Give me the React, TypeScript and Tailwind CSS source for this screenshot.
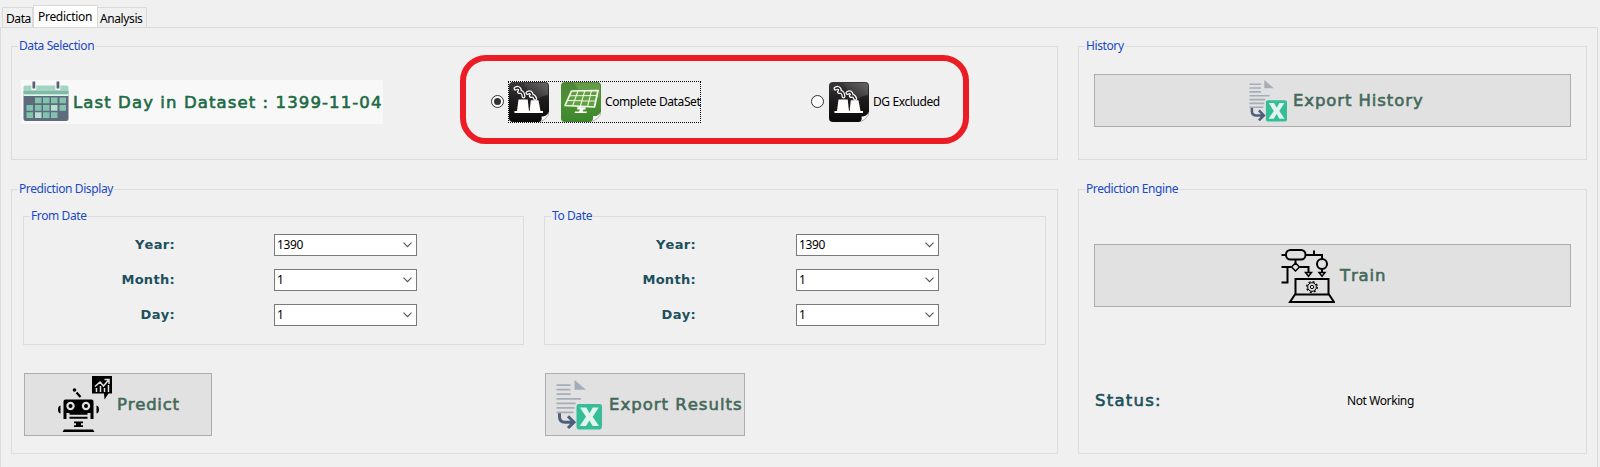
import type { ReactNode } from "react";

const UI = "font-['Noto_Sans','Open_Sans',sans-serif] text-[12px] tracking-[-0.4px]";
const HEAVY =
  "font-['DejaVu_Sans',sans-serif] text-[16.5px] leading-[20px] pt-[2px] whitespace-nowrap [font-kerning:none] [-webkit-text-stroke:0.6px_currentColor]";

function Group({ title, className, children }: { title: string; className: string; children: ReactNode }) {
  return (
    <section className={`border border-[#dcdcdc] ${className}`}>
      <h2 className="-mt-[9px] ml-[6px] h-[17px] w-fit bg-[#f0f0f0] px-px leading-[16px] whitespace-nowrap text-[#1a49c4]">
        {title}
      </h2>
      {children}
    </section>
  );
}

function CalendarIcon() {
  return (
    <svg width="46" height="42" viewBox="0 0 46 42" className="shrink-0">
      <path d="M0.5 14h45v23.500q0 2.500-2.500 2.500h-40q-2.500 0-2.500-2.500z" fill="#5e6b7d" />
      <path d="M0.500 14V6.500q0-2 2-2h41q2 0 2 2V14z" fill="#a5d3c2" />
      <path d="M0.500 10h45v3h-45z" fill="#7dbba5" />
      <path d="M0.500 13.500h45v1.500h-45z" fill="#e5f2ee" />
      <path d="M8.300 0h5v9h-5zM32.300 0h5v9h-5z" fill="#f7f7f7" />
      <path d="M9.500 0.500h2.700v7H9.500zM33.600 0.500h2.700v7h-2.700z" fill="#556074" />
      <g fill="#83c3ad">
        <path d="M12 16.500h6.500v5.800h-6.500zM20 16.500h6.500v5.800h-6.500zM28 16.500h6.500v5.800h-6.500zM36.500 16.500h6.500v5.800h-6.500z" />
        <path d="M3.500 24h6.500v5.800h-6.500zM12 24h6.500v5.800h-6.500zM20 24h6.500v5.800h-6.500zM36.500 24h6.500v5.800h-6.500z" />
        <path d="M3.500 31.200h6.500v5.800h-6.500zM20 31.200h6.500v5.800h-6.500zM28 31.200h6.500v5.800h-6.500z" />
      </g>
      <path d="M28 24h6.500v5.800h-6.500zM12 31.200h6.500v5.800h-6.500z" fill="#b6dfd1" />
    </svg>
  );
}

const SMOKE =
  "M6.500 6.500q3-1.500 4 0.500t-0.500 3q2.500-0.500 3.500 1t1 3.500M18.500 11q2.500-1.500 3.700 0.300t-0.400 2.700q2.500-0.500 3.300 0.700t1.100 2";

function PlantIcon() {
  return (
    <svg width="40" height="40" viewBox="0 0 40 40" className="shrink-0">
      <defs>
        <linearGradient id="plant" x1="0" y1="0" x2="0" y2="1">
          <stop offset="0" stopColor="#3b3738" />
          <stop offset="0.5" stopColor="#1b191a" />
          <stop offset="1" stopColor="#0b0a0b" />
        </linearGradient>
        <linearGradient id="gloss" x1="1" y1="0" x2="0.2" y2="0.8">
          <stop offset="0" stopColor="#8a8788" />
          <stop offset="1" stopColor="#2a2728" />
        </linearGradient>
      </defs>
      <rect width="40" height="40" rx="4" fill="url(#plant)" />
      <path d="M14 1h22q3 0 3 3v9q-9 1-16 9-2-12-9-21z" fill="url(#gloss)" opacity="0.6" />
      <path d="M30.500 40Q38.500 36.500 40 30V40z" fill="#f0f0f0" />
      <path d="M30.500 40Q33.500 38 32.500 34.500 37 35 40 30 39.500 36.500 30.500 40z" fill="#fff" />
      <path d="M30.500 40Q38.500 37 40 30.500" fill="none" stroke="#8c8c8c" strokeWidth="0.700" />
      <path d="M9.500 17.500h9.200l1.300 11.500h0.600l1.200-10.700h7.700L31.500 29H34v2H5.500v-2H8z" fill="#fffefa" />
      <g fill="none" strokeLinecap="round" strokeLinejoin="round">
        <path d={SMOKE} stroke="#fff" strokeWidth="4" />
        <path d={SMOKE} stroke="#2b2829" strokeWidth="1.500" />
      </g>
    </svg>
  );
}

function SolarIcon() {
  return (
    <svg width="40" height="40" viewBox="0 0 40 40" className="shrink-0">
      <defs>
        <linearGradient id="solar" x1="0" y1="0" x2="0" y2="1">
          <stop offset="0" stopColor="#4d8636" />
          <stop offset="0.500" stopColor="#4c9233" />
          <stop offset="1" stopColor="#3c852b" />
        </linearGradient>
      </defs>
      <rect width="40" height="40" rx="4" fill="url(#solar)" />
      <path d="M13 1h23q3 0 3 3v11Q28 17 21 27 20 11 13 1z" fill="#78a957" opacity="0.55" />
      <path d="M29.500 40Q38.500 36.500 40 30V40z" fill="#f0f0f0" />
      <path d="M29.500 40Q33 38 32 34 37 35 40 30 39.500 36.500 29.500 40z" fill="#fff" />
      <path d="M29.500 40Q38.500 37 40 30.500" fill="none" stroke="#8c9c84" strokeWidth="0.700" />
      <path d="M10.500 9L37 8.500 33.500 25 4 23.500z" fill="#5f9f45" stroke="#f6fbe9" strokeWidth="1.700" strokeLinejoin="round" />
      <path
        d="M8.500 13.700L36 13.500M6.500 18.500l28.500 0.500M17 9l-5.500 15M23.700 9l-4.500 15.500M30.500 8.700L26.500 24.700"
        stroke="#f0f8dc"
        strokeWidth="1.100"
      />
      <path d="M16.500 25l8.500 0.400-0.600 2h-2l-0.600 2h4.200l-0.500 1.600H13.500l0.600-1.600h4l0.600-2h-2.700z" fill="#fff" />
    </svg>
  );
}

function ExportIcon({ width, height }: { width: number; height: number }) {
  return (
    <svg width={width} height={height} viewBox="0 0 46 51" preserveAspectRatio="none" className="shrink-0">
      <path d="M18.500 0v10h11.500z" fill="#a4adb8" />
      <path
        d="M0.500 5.200h14M0.500 9.800h14M0.500 14.400h14M0.500 19.200h24.500M0.500 23.800h19M0.500 28.400h18M0.500 33h17"
        stroke="#a4adb8"
        strokeWidth="1.900"
      />
      <rect x="20.500" y="24.500" width="25.500" height="26" rx="2.500" fill="#35bd97" />
      <path d="M24 28h6.300l3.200 5.800L36.800 28h6l-6.100 9.500L43 47h-6.300l-3.300-5.800L30 47h-6.300l6.300-9.500z" fill="#e3f3ed" />
      <path d="M3.500 34v3.500q0 5.500 5.500 5.500h7M12 37l6 6-6 6" fill="none" stroke="#4e5f7c" strokeWidth="3" />
    </svg>
  );
}

function RobotIcon() {
  return (
    <svg width="56" height="57" viewBox="0 0 56 57" className="shrink-0">
      <path d="M35 0h20v17.500h-3.500l-4 6-0.500-6H35z" />
      <path
        d="M38 10.500l5-4.500 3.500 4 5-6M47.500 3.500h4.500v4.500M39.500 16v-4M43.500 16v-6M47.500 16v-4M51.500 16v-7"
        fill="none"
        stroke="#e1e1e1"
        strokeWidth="1.500"
      />
      <circle cx="17.500" cy="14" r="1.800" />
      <path d="M19.500 16.500l4 4.500" stroke="#000" strokeWidth="2.200" />
      <path d="M8.500 23.500h26q2 0 2 2V43h-3v-6H9.500v6h-3V25.500q0-2 2-2z" />
      <circle cx="13.500" cy="30" r="4.200" fill="#e1e1e1" />
      <circle cx="29" cy="30" r="4.200" fill="#e1e1e1" />
      <circle cx="13.500" cy="30" r="2" />
      <circle cx="29" cy="30" r="2" />
      <path d="M3.500 29.500v8Q1 37 1 33.500t2.500-4zM39.500 29.500v8q2.500-0.500 2.500-4t-2.500-4z" />
      <path d="M12.500 37.800h18M12.500 41.800h18" stroke="#000" strokeWidth="2" />
      <path d="M17 45.500h9v1.700h-2v2h2V51h-9v-1.800h2v-2h-2zM7 53.500h29l1.500 2.500H5.500z" />
    </svg>
  );
}

function TrainIcon() {
  return (
    <svg width="54" height="54" viewBox="0 0 54 54" fill="none" stroke="#000" strokeWidth="2" className="shrink-0">
      <rect x="5" y="1" width="19.500" height="9.500" rx="4.500" />
      <path d="M0.500 6H5M24.500 6H41v4M33 1.500V6M14.500 10.500V14M0.500 18H10M6.500 18v15.500h-6M19 18h8.500v5" />
      <path d="M14.500 14l4 4-4 4-4-4zM24.500 23.500h6l-3 3.800zM38 23.500h6l-3 3.800z" strokeWidth="1.500" />
      <circle cx="41" cy="15" r="5" />
      <path d="M41 20v3" />
      <path d="M14.500 45V30h33v15M14 45.500h34l5 7.500H9z" />
      <circle cx="31" cy="38" r="4.300" strokeWidth="1" />
      <circle cx="31" cy="38" r="5.300" strokeWidth="1.300" strokeDasharray="2.100 2.060" />
      <circle cx="31" cy="38" r="1.700" strokeWidth="1" />
    </svg>
  );
}

function Radio({ checked }: { checked?: boolean }) {
  return (
    <span className="flex size-[13px] shrink-0 items-center justify-center rounded-full border border-[#333] bg-white">
      {checked && <span className="size-[7px] rounded-full bg-[#333]" />}
    </span>
  );
}

function Combo({ label, value, gap }: { label: string; value: string; gap: string }) {
  return (
    <div className="flex h-[22px] items-center">
      <span className="w-[151px] text-right font-['DejaVu_Sans',sans-serif] text-[13px] font-bold tracking-[0.3px] text-[#1b505c] [font-kerning:none]">
        {label}
      </span>
      <div
        className={`flex h-[22px] w-[143px] items-center justify-between border border-[#7a7a7a] bg-white pr-[4px] pl-[2px] ${gap}`}
      >
        <span>{value}</span>
        <svg width="9" height="6" viewBox="0 0 9 6" fill="none" stroke="#555" strokeWidth="1.100">
          <path d="M0.500 0.700l4 4 4-4" />
        </svg>
      </div>
    </div>
  );
}

function DateGroup({ title, className, gap }: { title: string; className: string; gap: string }) {
  return (
    <Group title={title} className={`h-[129px] ${className}`}>
      <div className="mt-[9px] flex flex-col gap-[13px]">
        <Combo label="Year:" value="1390" gap={gap} />
        <Combo label="Month:" value="1" gap={gap} />
        <Combo label="Day:" value="1" gap={gap} />
      </div>
    </Group>
  );
}

const BUTTON = "flex items-center border border-[#adadad] bg-[#e1e1e1] text-[#44695a]";

export default function App() {
  return (
    <div className={`flex h-[467px] w-[1600px] flex-col overflow-hidden bg-[#f0f0f0] text-black ${UI}`}>
      <nav className="flex h-[27px] items-end pl-[2px]">
        <div className="h-[20px] w-[31px] border border-b-0 border-[#dadada] pl-[3px] leading-[22px]">Data</div>
        <div className="-mb-px h-[23px] w-[65px] border border-b-0 border-[#dadada] bg-white pl-[4px] leading-[22px] tracking-[-0.3px]">
          Prediction
        </div>
        <div className="h-[20px] w-[49px] border border-b-0 border-l-0 border-[#dadada] pl-[2px] leading-[22px]">
          Analysis
        </div>
      </nav>

      <main className="flex h-[440px] w-[1598px] gap-[20px] border border-b-0 border-[#dadada] pt-[18px] pl-[10px]">
        <div className="flex w-[1047px] shrink-0 flex-col gap-[29px]">
          <Group title="Data Selection" className="h-[114px]">
            <div className="flex items-start">
              <div className="mt-[25px] ml-[9px] flex h-[44px] w-[362px] items-center bg-[#f8f8f8] pl-[2px]">
                <CalendarIcon />
                <span className={`ml-[4px] tracking-[1.1px] text-[#1c6b43] ${HEAVY}`}>
                  Last Day in Dataset : 1399-11-04
                </span>
              </div>
              <div className="ml-[77px] flex h-[89px] w-[509px] items-center rounded-[26px] border-[6px] border-[#ec1c24] pt-[4px]">
                <div className="ml-[25px] flex items-center">
                  <Radio checked />
                  <div className="ml-[4px] flex h-[42px] w-[193px] items-center border border-dotted border-black">
                    <PlantIcon />
                    <span className="w-[12px] shrink-0" />
                    <SolarIcon />
                    <span className="ml-[4px] whitespace-nowrap">Complete DataSet</span>
                  </div>
                </div>
                <div className="ml-[110px] flex items-center">
                  <Radio />
                  <span className="w-[5px]" />
                  <PlantIcon />
                  <span className="ml-[4px] whitespace-nowrap">DG Excluded</span>
                </div>
              </div>
            </div>
          </Group>

          <Group title="Prediction Display" className="h-[265px]">
            <div className="mt-[18px] flex">
              <DateGroup title="From Date" className="ml-[11px] w-[501px]" gap="ml-[99px]" />
              <DateGroup title="To Date" className="ml-[20px] w-[502px]" gap="ml-[100px]" />
            </div>
            <div className="mt-[28px] flex">
              <button className={`ml-[12px] h-[63px] w-[188px] pl-[32px] ${BUTTON}`}>
                <RobotIcon />
                <span className={`-mt-[2px] ml-[4px] tracking-[0.75px] ${HEAVY}`}>Predict</span>
              </button>
              <button className={`ml-[333px] h-[63px] w-[200px] pl-[10px] ${BUTTON}`}>
                <ExportIcon width={46} height={50} />
                <span className={`-mt-[2px] ml-[7px] tracking-[1px] ${HEAVY}`}>Export Results</span>
              </button>
            </div>
          </Group>
        </div>

        <div className="flex w-[509px] shrink-0 flex-col gap-[29px]">
          <Group title="History" className="h-[114px]">
            <button className={`mt-[19px] ml-[15px] h-[53px] w-[477px] pl-[154px] ${BUTTON}`}>
              <ExportIcon width={38} height={42} />
              <span className={`-mt-px ml-[6px] tracking-[0.9px] ${HEAVY}`}>Export History</span>
            </button>
          </Group>
          <Group title="Prediction Engine" className="h-[265px]">
            <button className={`mt-[46px] ml-[15px] h-[63px] w-[477px] pl-[186px] ${BUTTON}`}>
              <TrainIcon />
              <span className={`-mt-[2px] ml-[5px] tracking-[0.85px] ${HEAVY}`}>Train</span>
            </button>
            <div className="mt-[82px] ml-[16px] flex items-center">
              <span className={`w-[252px] tracking-[1.25px] text-[#1b505c] ${HEAVY}`}>Status:</span>
              <span className="pt-[2px]">Not Working</span>
            </div>
          </Group>
        </div>
      </main>
    </div>
  );
}
